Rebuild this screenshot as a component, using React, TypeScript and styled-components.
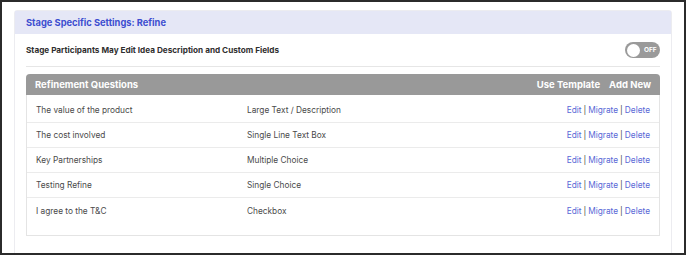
import React from "react";
import styled, { createGlobalStyle } from "styled-components";

const GlobalStyle = createGlobalStyle`
  html, body {
    margin: 0;
    padding: 0;
    background: #ffffff;
  }
  body {
    font-family: Inter, "Liberation Sans", sans-serif;
  }
`;

const Frame = styled.div`
  box-sizing: border-box;
  width: 686px;
  height: 255px;
  border: 2px solid #2b2b2b;
  padding: 8px 12px 0 12px;
  overflow: hidden;
  background: #fff;
`;

const Card = styled.section`
  border: 1px solid #ececf0;
  border-radius: 3px 3px 0 0;
  height: 260px;
`;

const CardHeader = styled.div`
  background: #e5e7f6;
  height: 23px;
  display: flex;
  align-items: center;
  padding: 0 11px;
  color: #3d4ed0;
  font-size: 9.3px;
  font-weight: 700;
`;

const CardBody = styled.div`
  padding: 0 11px;
`;

const SettingRow = styled.div`
  height: 32px;
  display: flex;
  align-items: center;
  justify-content: space-between;
  border-bottom: 1px solid #e6e6e6;
  font-size: 8.2px;
  font-weight: 700;
  color: #2f2f2f;
`;

const Toggle = styled.div`
  width: 35px;
  height: 16px;
  border-radius: 8px;
  background: #9a9a9a;
  display: flex;
  align-items: center;
  padding: 0 2px;
  box-sizing: border-box;
  gap: 4px;
`;

const Knob = styled.span`
  width: 13px;
  height: 13px;
  border-radius: 50%;
  background: #fff;
`;

const ToggleText = styled.span`
  color: #fff;
  font-size: 6.5px;
  font-weight: 700;
`;

const Table = styled.div`
  margin-top: 7px;
  border: 1px solid #e4e4e4;
  border-top: none;
  border-radius: 4px 4px 0 0;
  padding-bottom: 12px;
`;

const TableHead = styled.div`
  background: #999999;
  height: 21px;
  margin: 0 -1px;
  border-radius: 4px 4px 0 0;
  display: flex;
  align-items: center;
  padding: 0 9px;
  color: #fff;
  font-size: 9.5px;
  font-weight: 700;
`;

const HeadTitle = styled.span`
  flex: 1;
`;

const HeadAction = styled.span`
  margin-left: 9px;
`;

const TableBody = styled.div`
  padding-top: 3px;
`;

const Row = styled.div<{ $last?: boolean }>`
  display: grid;
  grid-template-columns: 211px 1fr auto;
  align-items: center;
  height: 25px;
  box-sizing: border-box;
  padding: 0 9px;
  border-bottom: ${(p) => (p.$last ? "none" : "1px solid #ebebeb")};
  font-size: 8.3px;
  color: #4a4a4a;
`;

const Actions = styled.span`
  color: #5868d6;
`;

const Sep = styled.span`
  color: #444;
  margin: 0 2px;
`;

const questions = [
  ["The value of the product", "Large Text / Description"],
  ["The cost involved", "Single Line Text Box"],
  ["Key Partnerships", "Multiple Choice"],
  ["Testing Refine", "Single Choice"],
  ["I agree to the T&C", "Checkbox"],
];

export default function App() {
  return (
    <>
      <GlobalStyle />
      <Frame>
        <Card>
          <CardHeader>Stage Specific Settings: Refine</CardHeader>
          <CardBody>
            <SettingRow>
              <span>Stage Participants May Edit Idea Description and Custom Fields</span>
              <Toggle>
                <Knob />
                <ToggleText>OFF</ToggleText>
              </Toggle>
            </SettingRow>
            <Table>
              <TableHead>
                <HeadTitle>Refinement Questions</HeadTitle>
                <HeadAction>Use Template</HeadAction>
                <HeadAction>Add New</HeadAction>
              </TableHead>
              <TableBody>
                {questions.map(([name, type], i) => (
                  <Row key={name} $last={i === questions.length - 1}>
                    <span>{name}</span>
                    <span>{type}</span>
                    <Actions>
                      Edit<Sep>|</Sep>Migrate<Sep>|</Sep>Delete
                    </Actions>
                  </Row>
                ))}
              </TableBody>
            </Table>
          </CardBody>
        </Card>
      </Frame>
    </>
  );
}
